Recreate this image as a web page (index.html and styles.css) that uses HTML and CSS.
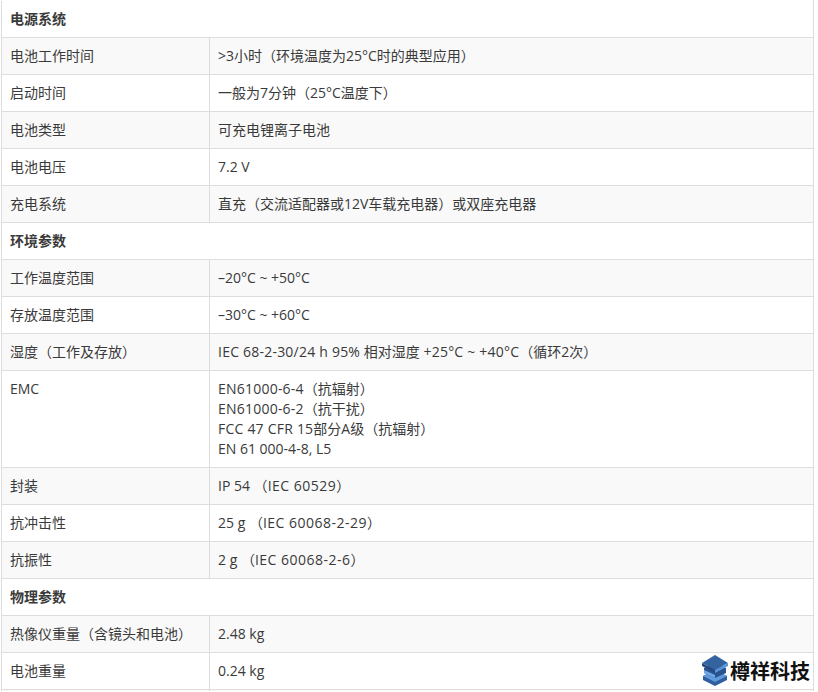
FILE: index.html
```html
<!DOCTYPE html>
<html lang="zh">
<head>
<meta charset="utf-8">
<title>规格</title>
<link rel="stylesheet" href="styles.css">
</head>
<body>
<table class="spec">
<colgroup><col class="c1"><col class="c2"></colgroup>
<tbody>
<tr><th colspan="2">电源系统</th></tr>
<tr><td>电池工作时间</td><td>&gt;3小时（环境温度为25°C时的典型应用）</td></tr>
<tr><td>启动时间</td><td>一般为7分钟（25°C温度下）</td></tr>
<tr><td>电池类型</td><td>可充电锂离子电池</td></tr>
<tr><td>电池电压</td><td>7.2 V</td></tr>
<tr><td>充电系统</td><td>直充（交流适配器或12V车载充电器）或双座充电器</td></tr>
<tr><th colspan="2">环境参数</th></tr>
<tr><td>工作温度范围</td><td>–20°C ~ +50°C</td></tr>
<tr><td>存放温度范围</td><td>–30°C ~ +60°C</td></tr>
<tr><td>湿度（工作及存放）</td><td><span class="wide">IEC 68-2-30/24 h 95%</span> 相对湿度 <span class="wide">+25°C ~ +40°C</span>（循环2次）</td></tr>
<tr><td>EMC</td><td><span class="wide">EN61000-6-4</span>（抗辐射）<br><span class="wide">EN61000-6-2</span>（抗干扰）<br><span class="wide">FCC 47 CFR 15</span>部分A级（抗辐射）<br>EN 61 000-4-8, L5</td></tr>
<tr><td>封装</td><td>IP 54 （<span class="wider">IEC 60529</span>）</td></tr>
<tr><td>抗冲击性</td><td>25 g （<span class="wider">IEC 60068-2-29</span>）</td></tr>
<tr><td>抗振性</td><td>2 g （<span class="wider">IEC 60068-2-6</span>）</td></tr>
<tr><th colspan="2">物理参数</th></tr>
<tr><td>热像仪重量（含镜头和电池）</td><td>2.48 kg</td></tr>
<tr><td>电池重量</td><td>0.24 kg</td></tr>
<tr class="cut"><td></td><td></td></tr>
</tbody>
</table>
<div class="mark">
<svg class="mark-icon" width="26" height="31" viewBox="0 0 26 31" aria-hidden="true">
<path d="M1 21 L13 15 L25 21 L25 25 L13 31 L1 25 Z" fill="#2f5f9e"/>
<path d="M1 21 L13 27 L25 21 L13 15 Z" fill="#5f9bdc"/>
<path d="M2 13 L13 8 L24 13 L24 18 L13 23 L2 18 Z" fill="#2a548f"/>
<path d="M2 15 L13 20 L13 23 L2 18 Z" fill="#6ea8e6"/>
<path d="M0 8 L13 0 L26 8 L13 15 Z" fill="#34649f"/>
<path d="M0 8 L13 15 L13 18 L0 11 Z" fill="#264a80"/>
<path d="M26 8 L13 15 L13 18 L26 11 Z" fill="#5b95d6"/>
</svg>
<span class="mark-text">樽祥科技</span>
</div>
</body>
</html>
```
FILE: styles.css
```css
html, body {
  margin: 0;
  padding: 0;
  background: #fff;
}
body {
  position: relative;
  height: 692px;
  padding-left: 1px;
  box-sizing: border-box;
  font-family: "Open Sans", "Noto Sans CJK SC", sans-serif;
  font-size: 14px;
  line-height: 20px;
  color: #3a3a3a;
}
.spec {
  width: 813px;
  table-layout: fixed;
  border-collapse: collapse;
}
.c1 { width: 208px; }
.spec th, .spec td {
  border: 1px solid #ddd;
  padding: 8px;
  text-align: left;
  vertical-align: top;
  font-weight: 400;
}
.spec th { font-weight: 700; }
.spec tr:first-child th { border-top-color: #fff; }
.spec tr:nth-child(even) { background: #f9f9f9; }
.spec .cut td {
  height: 1px;
  padding: 0;
  line-height: 0;
  border-bottom: 0;
}
.wide { letter-spacing: 0.22px; }
.wider { letter-spacing: 0.5px; }
.mark {
  position: absolute;
  left: 702px;
  top: 655px;
  display: flex;
  align-items: center;
  gap: 2px;
}
.mark-text {
  font-family: "Noto Sans CJK SC", sans-serif;
  font-size: 20px;
  line-height: 30px;
  font-weight: 700;
  color: #111;
}
```
